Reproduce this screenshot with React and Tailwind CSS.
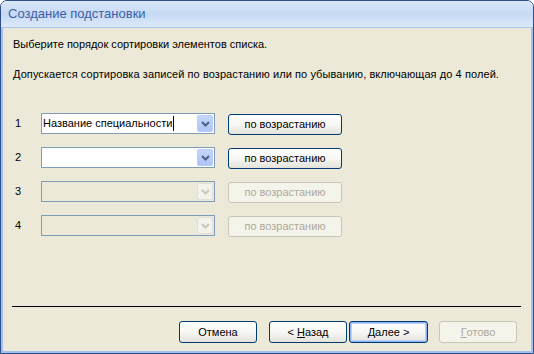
import React from 'react';

function Chevron({ color }) {
  return (
    <svg width="9" height="6" viewBox="0 0 9 6">
      <path d="M1 1 L4.5 4.5 L8 1" fill="none" stroke={color} strokeWidth="2" />
    </svg>
  );
}

function Combo({ value, disabled, caret }) {
  return (
    <div
      className={`flex h-[21px] w-[174px] border border-[#7F9DB9] ${disabled ? 'bg-[#ECE9D8]' : 'bg-white'}`}
    >
      <div className="flex flex-1 items-center pl-[1px] text-[11px] leading-[13px] text-black">
        <span>{value}</span>
        {caret && <span className="ml-[1px] h-[15px] w-px bg-black" />}
      </div>
      <div className="p-px">
        {disabled ? (
          <div className="flex h-full w-[16px] items-center justify-center rounded-[2px] border border-[#E2E0D6] bg-[#F3F2EC]">
            <Chevron color="#C9C7BA" />
          </div>
        ) : (
          <div className="flex h-full w-[16px] items-center justify-center rounded-[2px] border border-[#B9CDF8] bg-gradient-to-b from-[#C6D6FC] to-[#AFC4F6]">
            <Chevron color="#4D6185" />
          </div>
        )}
      </div>
    </div>
  );
}

function XpButton({ children, disabled, isDefault, className = '' }) {
  if (disabled) {
    return (
      <div
        className={`flex shrink-0 items-center justify-center rounded-[3px] border border-[#C9C7BA] bg-[#F5F4EA] text-[11px] text-[#ACA899] ${className}`}
      >
        {children}
      </div>
    );
  }
  return (
    <div
      className={`flex shrink-0 items-center justify-center rounded-[3px] border border-[#003C74] bg-gradient-to-b from-white via-[#F7F7F4] to-[#E3E2DA] text-[11px] text-black ${isDefault ? 'shadow-[inset_0_0_0_1px_#8DB2F0,inset_0_0_0_2px_#B9D1F6]' : ''} ${className}`}
    >
      {children}
    </div>
  );
}

const rows = [
  { n: '1', value: 'Название специальности', caret: true },
  { n: '2', value: '' },
  { n: '3', value: '', disabled: true },
  { n: '4', value: '', disabled: true },
];

export default function App() {
  return (
    <div className="flex h-[354px] w-[534px] flex-col overflow-hidden rounded-t-[7px] border border-[#2E4F8C] bg-[#ECE9D8] font-['Liberation_Sans',Arial,sans-serif]">
      {/* Title bar */}
      <div className="flex h-[27px] shrink-0 items-center border-b border-[#A9C6EC] bg-gradient-to-b from-[#DAE7F8] via-[#C6DAF5] to-[#DCE9FA] pl-[7px] text-[13px] text-[#3C5EA6]">
        Создание подстановки
      </div>

      {/* Body */}
      <div className="flex flex-1 flex-col border-x-2 border-b-2 border-[#A3BFEA]">
        <div className="pl-[10px] pt-[10px] text-[11px] leading-[13px] text-black">
          <p>Выберите порядок сортировки элементов списка.</p>
          <p className="mt-[17px] tracking-[0.08px]">
            Допускается сортировка записей по возрастанию или по убыванию, включающая до 4 полей.
          </p>
        </div>

        <div className="mt-[32px] flex flex-col gap-[13px] pl-[12px]">
          {rows.map((r) => (
            <div key={r.n} className="flex h-[21px] items-start">
              <div className="flex h-[21px] w-[26px] items-center text-[11px] text-black">{r.n}</div>
              <Combo value={r.value} disabled={r.disabled} caret={r.caret} />
              <XpButton disabled={r.disabled} className="ml-[13px] mt-[1px] h-[21px] w-[114px]">
                по возрастанию
              </XpButton>
            </div>
          ))}
        </div>

        <div className="ml-[9px] mr-[10px] mt-[70px] h-px bg-black" />

        <div className="mt-[14px] flex justify-end pr-[14px]">
          <XpButton className="h-[22px] w-[78px]">Отмена</XpButton>
          <XpButton className="ml-[12px] h-[22px] w-[78px]">
            &lt;&nbsp;<span className="underline">Н</span>азад
          </XpButton>
          <XpButton isDefault className="ml-[2px] h-[22px] w-[79px]">
            <span className="underline">Д</span>алее &gt;
          </XpButton>
          <XpButton disabled className="ml-[11px] h-[22px] w-[78px]">
            <span className="underline">Г</span>отово
          </XpButton>
        </div>
      </div>
    </div>
  );
}
